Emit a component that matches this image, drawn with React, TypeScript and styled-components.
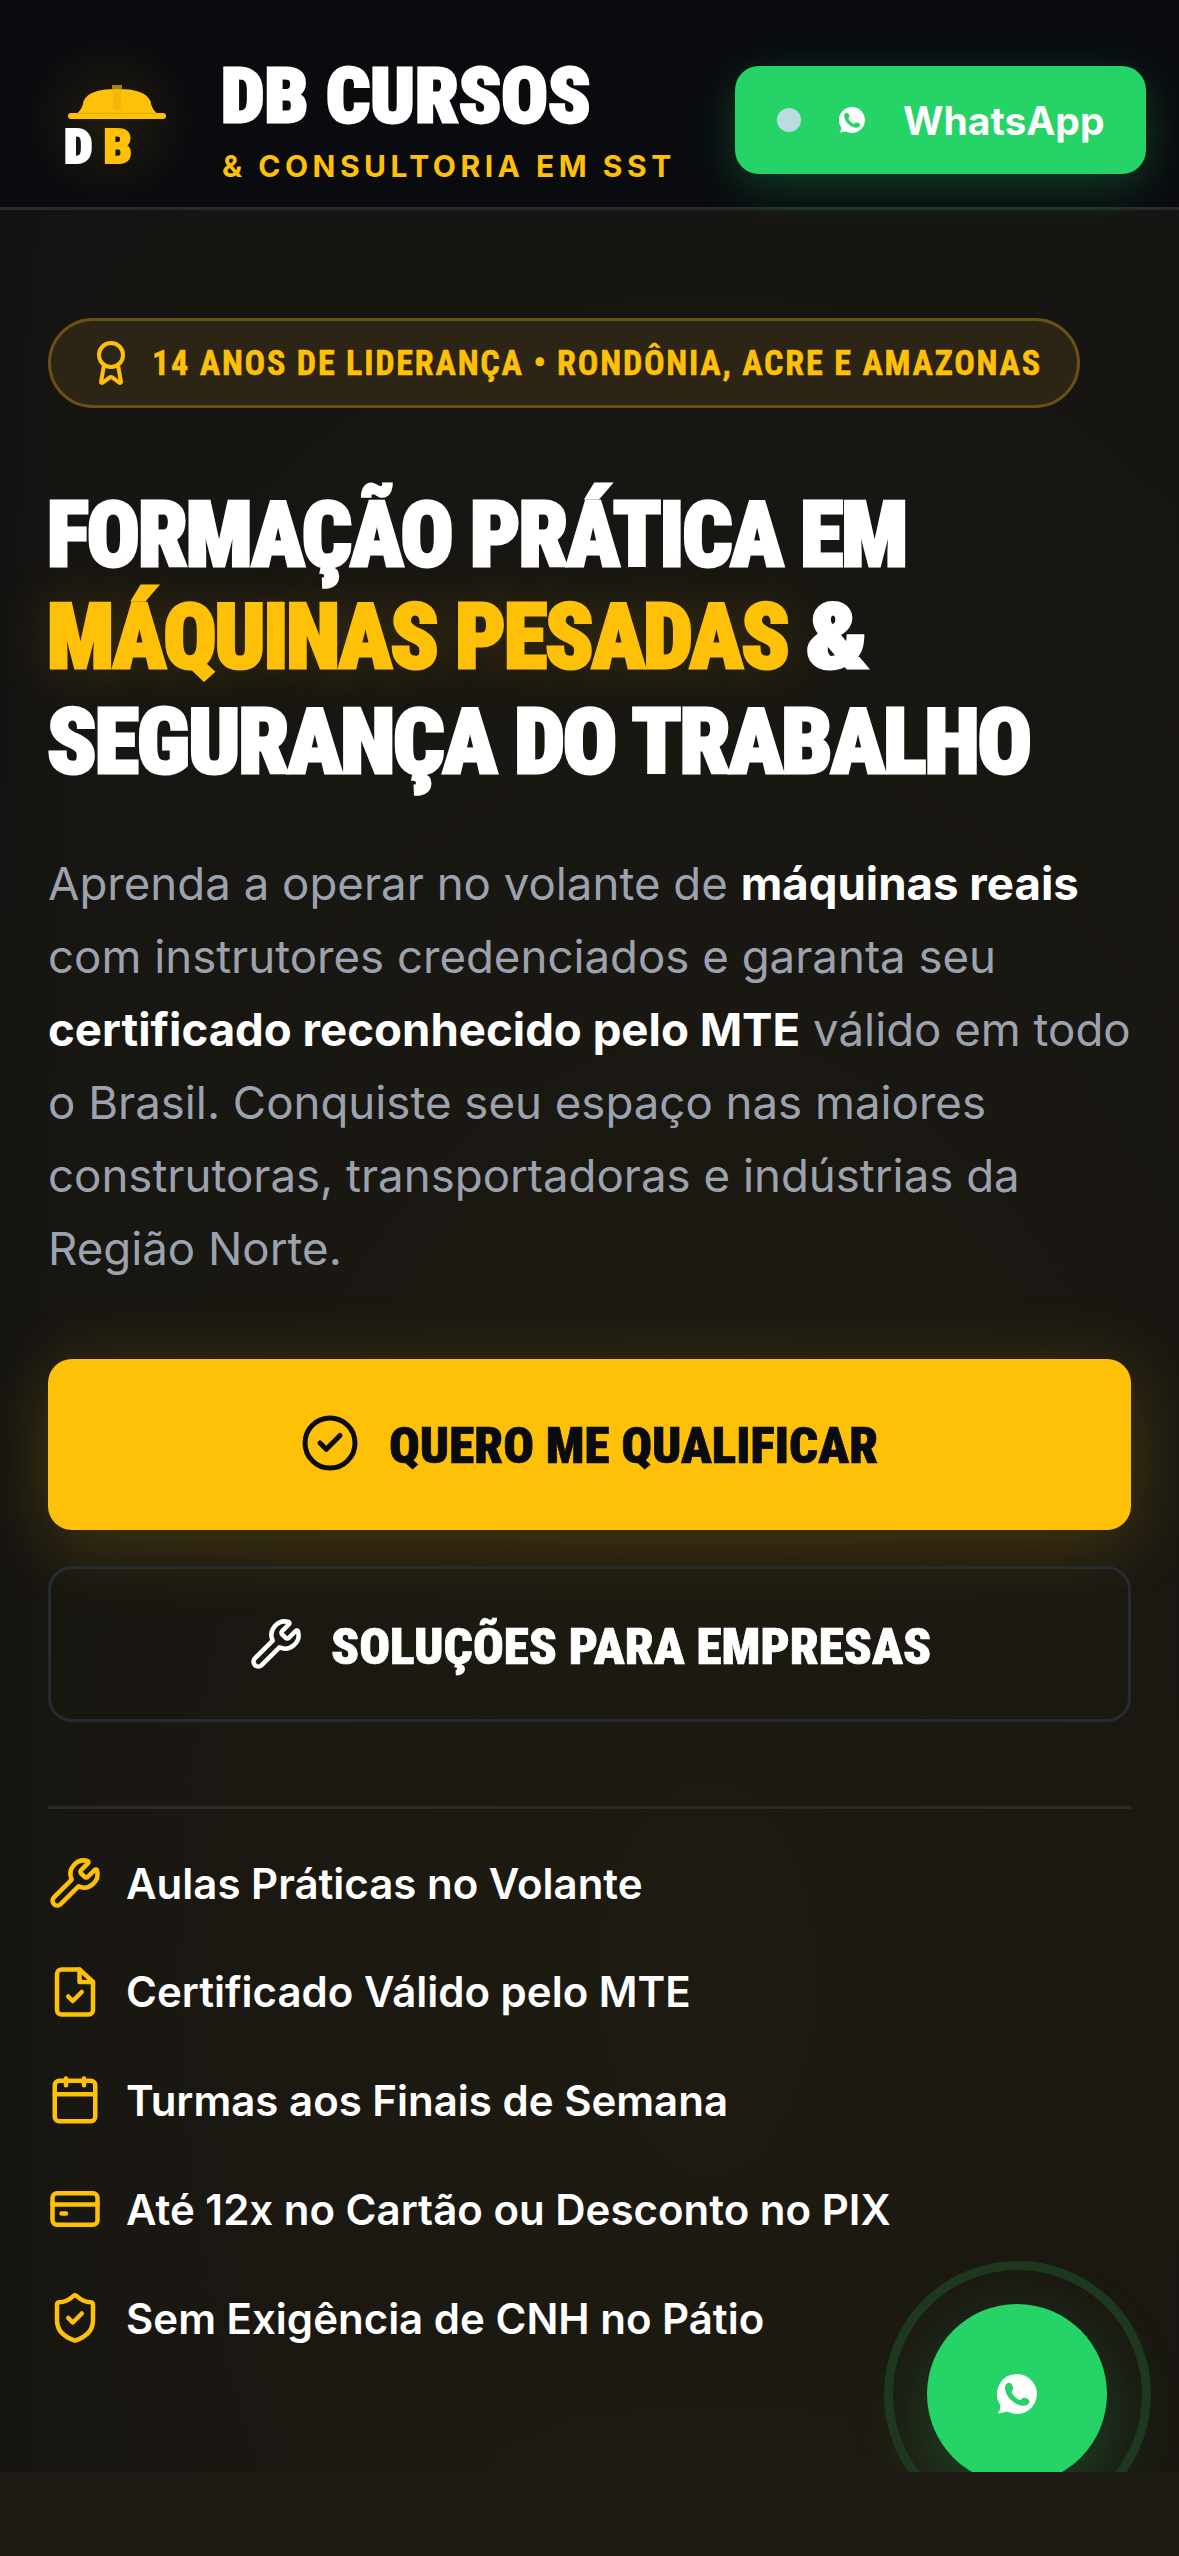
import React, { useLayoutEffect, useRef, useState } from "react";
import styled, { createGlobalStyle } from "styled-components";
import { Award, ShieldCheck, Wrench } from "lucide-react";

const gold = "#ffc107";
const green = "#25d366";
const ink = "#0a0b0f";
const line = "#262b33";

const GlobalStyle = createGlobalStyle`
  *, *::before, *::after { box-sizing: border-box; }
  body { margin: 0; background: #1e1b14; font-family: Inter, "Liberation Sans", sans-serif; color: #fff; }
  h1, p, ul { margin: 0; padding: 0; }
  button { border: 0; font: inherit; color: inherit; background: none; padding: 0; }
`;

const Page = styled.div`
  height: 2556px;
  background: #1e1b14;
`;

const Screen = styled.div`
  position: relative;
  height: 2472px;
  overflow: hidden;
  background:
    radial-gradient(ellipse 480px 90px at 62% 100%, rgba(255, 193, 7, 0.015), transparent),
    linear-gradient(90deg, rgba(10, 11, 15, 0.22), transparent 70px),
    radial-gradient(ellipse 1300px 2300px at 60% 80%, rgba(255, 193, 7, 0.06), rgba(255, 193, 7, 0.018) 100%),
    #101012;
`;

const Header = styled.header`
  display: flex;
  align-items: center;
  height: 210px;
  padding: 33px 33px 0;
  border-bottom: 3px solid ${line};
  background: ${ink};
`;

const Logo = styled.svg`
  flex: none;
  width: 165px;
  height: 144px;
  margin-right: 24px;
  overflow: visible;
`;

const Brand = styled.div`
  flex: 1;
  display: flex;
  flex-direction: column;
  gap: 13px;
`;

const FitBox = styled.span<{ $width: number }>`
  display: inline-block;
  width: ${(p) => p.$width}px;
  white-space: nowrap;
`;

const FitText = styled.span`
  display: inline-block;
  transform-origin: 0 50%;
`;

const Fit = ({ width, children }: { width: number; children: React.ReactNode }) => {
  const ref = useRef<HTMLSpanElement>(null);
  const [scale, setScale] = useState(1);
  useLayoutEffect(() => {
    if (ref.current) setScale(width / ref.current.offsetWidth);
  }, [width]);
  return (
    <FitBox $width={width}>
      <FitText ref={ref} style={{ transform: `scaleX(${scale})` }}>{children}</FitText>
    </FitBox>
  );
};

const condensed = `
  font-family: "Roboto Condensed", Roboto, "Liberation Sans", sans-serif;
  font-stretch: 75%;
`;

const BrandName = styled.div`
  ${condensed}
  margin-left: -1px;
  font-size: 76px;
  line-height: 78px;
  font-weight: 900;
  -webkit-text-stroke: 2.8px currentColor;
`;

const BrandTag = styled.div`
  font-size: 30px;
  line-height: 36px;
  font-weight: 700;
  letter-spacing: 4.5px;
  color: ${gold};
  white-space: nowrap;
`;

const ChatButton = styled.button`
  display: flex;
  align-items: center;
  flex: none;
  width: 411px;
  height: 108px;
  padding-left: 42px;
  border-radius: 24px;
  background: ${green};
  box-shadow: 0 12px 45px rgba(37, 211, 102, 0.25);
  font-size: 39px;
  font-weight: 700;
`;

const StatusDot = styled.span`
  width: 24px;
  height: 24px;
  margin-right: 38px;
  border-radius: 50%;
  background: #b9dce2;
`;

const ChatGlyph = styled.svg<{ $size: number }>`
  flex: none;
  width: ${(p) => p.$size}px;
  height: ${(p) => p.$size}px;
`;

const ChatLabel = styled.span`
  margin-left: 38px;
`;

const Hero = styled.main`
  padding: 108px 48px 0;
`;

const Pill = styled.div`
  display: flex;
  align-items: center;
  gap: 17px;
  width: 1032px;
  height: 90px;
  padding-left: 36px;
  border: 3px solid #6b5014;
  border-radius: 45px;
  background: #2c2414;
  color: ${gold};
  ${condensed}
  font-size: 35px;
  font-weight: 700;
  letter-spacing: 1.8px;
  -webkit-text-stroke: 0.5px currentColor;
`;

const Title = styled.h1`
  ${condensed}
  margin: 76px 0 0 -1px;
  font-size: 90px;
  line-height: 103.5px;
  font-weight: 900;
  letter-spacing: -2px;
  -webkit-text-stroke: 3px currentColor;
`;

const TitleLine = styled.span<{ $lift?: boolean }>`
  display: flex;
  gap: 18px;
  margin: ${(p) => (p.$lift ? "-2px 0 2px" : 0)};
`;

const Highlight = styled.span`
  color: ${gold};
  text-shadow: 0 0 60px rgba(255, 193, 7, 0.2);
`;

const Lead = styled.p`
  margin-top: 52px;
  font-size: 45.6px;
  line-height: 73.1px;
  color: #9ca3af;
  white-space: nowrap;

  strong { color: #fff; font-weight: 700; }
`;

const Actions = styled.div`
  display: flex;
  flex-direction: column;
  gap: 36px;
  margin-top: 74px;
`;

const Action = styled.button<{ $primary?: boolean }>`
  display: flex;
  align-items: center;
  justify-content: center;
  gap: ${(p) => (p.$primary ? 24 : 21)}px;
  height: ${(p) => (p.$primary ? 171 : 156)}px;
  padding-right: 6px;
  padding-bottom: ${(p) => (p.$primary ? 3 : 0)}px;
  border: ${(p) => (p.$primary ? "0" : `3px solid ${line}`)};
  border-radius: 24px;
  background: ${(p) => (p.$primary ? gold : "transparent")};
  box-shadow: ${(p) => (p.$primary ? "0 12px 75px rgba(255, 193, 7, 0.2)" : "none")};
  color: ${(p) => (p.$primary ? ink : "#fff")};
  ${condensed}
  font-size: 50px;
  font-weight: 900;
`;

const ActionLabel = styled.span`
  padding-top: 6px;
  -webkit-text-stroke: 0.7px currentColor;
`;

const Benefits = styled.ul`
  display: flex;
  flex-direction: column;
  gap: 45.8px;
  margin-top: 84px;
  padding-top: 42.5px;
  border-top: 3px solid #2c2b26;
  list-style: none;
`;

const Benefit = styled.li`
  display: flex;
  align-items: center;
  gap: 24px;
  height: 63px;
  font-size: 42px;
  font-weight: 600;

  svg { color: ${gold}; }
`;

const FloatingChat = styled.button`
  position: absolute;
  top: 2304px;
  left: 927px;
  display: grid;
  place-items: center;
  width: 180px;
  height: 180px;
  border-radius: 50%;
  background: ${green};
  box-shadow: 0 24px 75px rgba(37, 211, 102, 0.25);

  &::after {
    content: "";
    position: absolute;
    inset: -43.5px;
    border: 9px solid #1e3820;
    border-radius: 50%;
  }
`;

const Bubble = ({ size }: { size: number }) => (
  <ChatGlyph $size={size} viewBox="0 0 40 40">
    <path
      fill="#fff"
      fillRule="evenodd"
      d="M20 0a20 20 0 1 1-9.2 37.8C8.300 37.300 4.500 39.200 1.400 39.400c-.7 0-.6-.7-.1-1.200 1.500-1.700 2.500-4.200 1.900-7.300A20 20 0 0 1 20 0ZM11.500 8.800c-2.200.6-3.700 2.700-3.500 5.500.5 8.200 9.500 17 17.700 17.500 3.800.1 6.800-1.900 6.700-4.800-.1-2-3.900-3.500-6-3.300-1.700.1-2 2.300-3.700 2.200-3-.7-7.200-4.800-8.200-7.800-.2-1.200 1.600-2 1.600-3.700 0-2-1.600-6.200-4.600-5.600Z"
    />
  </ChatGlyph>
);

const StrokeIcon = ({ size, children }: { size: number; children: React.ReactNode }) => (
  <svg
    width={size}
    height={size}
    viewBox="0 0 24 24"
    fill="none"
    stroke="currentColor"
    strokeWidth="2"
    strokeLinecap="round"
    strokeLinejoin="round"
  >
    {children}
  </svg>
);

const CheckIcon = ({ size }: { size: number }) => (
  <StrokeIcon size={size}>
    <circle cx="12" cy="12" r="10" />
    <path d="m8 12 2.500 2.500L16 9" />
  </StrokeIcon>
);

const FileIcon = ({ size }: { size: number }) => (
  <StrokeIcon size={size}>
    <path d="M14 2H6a2 2 0 0 0-2 2v16a2 2 0 0 0 2 2h12a2 2 0 0 0 2-2V7.500Z" />
    <path d="M14 2v5.500h6" />
    <path d="m9 14 2 2 4-4" />
  </StrokeIcon>
);

const CalendarIcon = ({ size }: { size: number }) => (
  <StrokeIcon size={size}>
    <rect x="3" y="3" width="18" height="18" rx="2" />
    <path d="M3 9h18M8 2v3M16 2v3" />
  </StrokeIcon>
);

const CardIcon = ({ size }: { size: number }) => (
  <StrokeIcon size={size}>
    <rect x="2" y="5" width="20" height="14" rx="2" />
    <path d="M2 10h20M6 14h2" />
  </StrokeIcon>
);

const HelmetLogo = () => (
  <Logo viewBox="0 0 165 144">
    <defs>
      <radialGradient id="halo">
        <stop offset="0" stopColor={gold} stopOpacity="0.09" />
        <stop offset="0.5" stopColor={gold} stopOpacity="0.045" />
        <stop offset="1" stopColor={gold} stopOpacity="0" />
      </radialGradient>
    </defs>
    <circle cx="77" cy="72" r="86" fill="url(#halo)" />
    <path d="M44 65.500Q50 60 50.500 53C55 44 66 41 84 41s29 3 33.500 12Q118 60 124 65.500Z" fill={gold} />
    <rect x="79" y="37" width="10" height="4.500" fill="#a97f10" />
    <rect x="80" y="41" width="8" height="21" fill="#f3b70a" />
    <rect x="35" y="65" width="98" height="6" rx="3" fill={gold} />
    <path d="M44 65.300h80" stroke="#dba608" strokeWidth="0.800" />
    <g fontFamily='"Roboto Condensed", Roboto, sans-serif' fontWeight="900" fontSize="47.500" strokeWidth="2">
      <text x="31" y="114.500" fill="#fff" stroke="#fff" textLength="28.500" lengthAdjust="spacingAndGlyphs">D</text>
      <text x="70.500" y="114.500" fill={gold} stroke={gold} textLength="28.500" lengthAdjust="spacingAndGlyphs">B</text>
    </g>
  </Logo>
);

const benefits = [
  { icon: Wrench, text: "Aulas Práticas no Volante" },
  { icon: FileIcon, text: "Certificado Válido pelo MTE" },
  { icon: CalendarIcon, text: "Turmas aos Finais de Semana" },
  { icon: CardIcon, text: "Até 12x no Cartão ou Desconto no PIX" },
  { icon: ShieldCheck, text: "Sem Exigência de CNH no Pátio" },
];

export default function App() {
  return (
    <Page>
      <GlobalStyle />
      <Screen>
        <Header>
          <HelmetLogo />
          <Brand>
            <BrandName><Fit width={369}>DB CURSOS</Fit></BrandName>
            <BrandTag>&amp; CONSULTORIA EM SST</BrandTag>
          </Brand>
          <ChatButton>
            <StatusDot />
            <Bubble size={26} />
            <ChatLabel>WhatsApp</ChatLabel>
          </ChatButton>
        </Header>
        <Hero>
          <Pill>
            <Award size={48} />
            <Fit width={890}>14 ANOS DE LIDERANÇA • RONDÔNIA, ACRE E AMAZONAS</Fit>
          </Pill>
          <Title>
            <TitleLine><Fit width={859}>FORMAÇÃO PRÁTICA EM</Fit></TitleLine>
            <TitleLine $lift>
              <Highlight><Fit width={741}>MÁQUINAS PESADAS</Fit></Highlight>
              <Fit width={61}>&amp;</Fit>
            </TitleLine>
            <TitleLine><Fit width={983}>SEGURANÇA DO TRABALHO</Fit></TitleLine>
          </Title>
          <Lead>
            Aprenda a operar no volante de <strong>máquinas reais</strong><br />
            com instrutores credenciados e garanta seu<br />
            <strong>certificado reconhecido pelo MTE</strong> válido em todo<br />
            o Brasil. Conquiste seu espaço nas maiores<br />
            construtoras, transportadoras e indústrias da<br />
            Região Norte.
          </Lead>
          <Actions>
            <Action $primary>
              <CheckIcon size={60} />
              <ActionLabel><Fit width={489}>QUERO ME QUALIFICAR</Fit></ActionLabel>
            </Action>
            <Action>
              <Wrench size={54} />
              <ActionLabel><Fit width={600}>SOLUÇÕES PARA EMPRESAS</Fit></ActionLabel>
            </Action>
          </Actions>
          <Benefits>
            {benefits.map(({ icon: Icon, text }) => (
              <Benefit key={text}>
                <Icon size={54} />
                {text}
              </Benefit>
            ))}
          </Benefits>
        </Hero>
        <FloatingChat aria-label="WhatsApp">
          <Bubble size={40} />
        </FloatingChat>
      </Screen>
    </Page>
  );
}
